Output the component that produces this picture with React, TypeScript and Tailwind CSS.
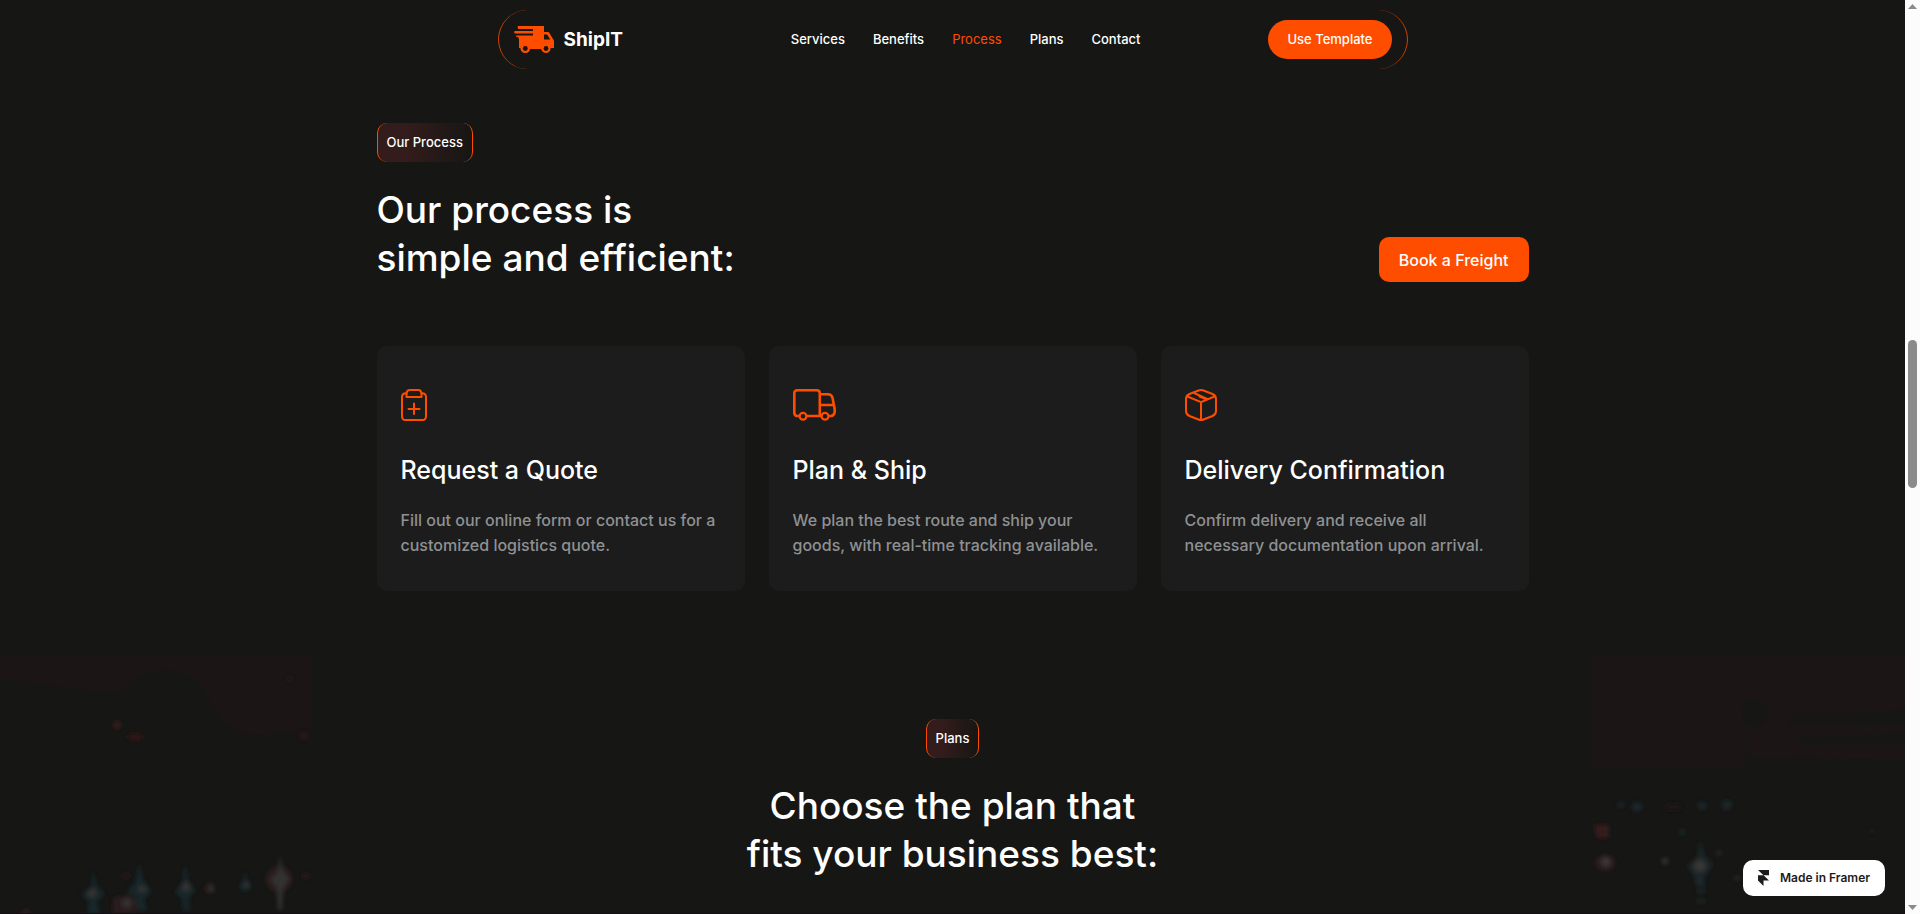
import React from "react";

interface Step {
  title: string;
  lines: [string, string];
  icon: React.ReactNode;
}

const navLinks = ["Services", "Benefits", "Process", "Plans", "Contact"];

const ClipboardIcon = () => (
  <svg
    width="26"
    height="32"
    viewBox="0 0 26 32"
    fill="none"
    stroke="#ff4d00"
    strokeWidth="2"
    strokeLinecap="round"
    strokeLinejoin="round"
  >
    <path d="M5.500 4.200H5C2.500 4.200 1 5.800 1 8.200v19C1 30 2.400 31 4.500 31h17c2.100 0 3.500-1 3.500-3.800v-19c0-2.400-1.500-4-4-4h-.5" />
    <path d="M9 1h8c2.500 0 3.500 1.500 3.500 4v3h-15V5c0-2.500 1-4 3.500-4Z" />
    <path d="M13 14.500v10.500M7.500 20h11" />
  </svg>
);

const TruckIcon = () => (
  <svg
    width="43"
    height="32"
    viewBox="0 0 43 32"
    fill="none"
    stroke="#ff4d00"
    strokeWidth="2.600"
    strokeLinejoin="round"
  >
    <path d="M6 27H4.500C2.600 27 1.300 25.800 1.300 24V4.300c0-1.900 1.100-3 3-3h19.500c1.900 0 3 1.100 3 3V27M14 27h14" />
    <path d="M26.800 5.200h8c3 0 4.300 1.300 4.800 4l2 10.500c.6 4-.6 7.300-4.100 7.300H36M26.800 16h14" />
    <circle cx="10" cy="27.300" r="3.400" strokeWidth="2.200" />
    <circle cx="32" cy="27.300" r="3.400" strokeWidth="2.200" />
  </svg>
);

const BoxIcon = () => (
  <svg
    width="32"
    height="32"
    viewBox="0 0 32 32"
    fill="none"
    stroke="#ff4d00"
    strokeWidth="2"
    strokeLinecap="round"
    strokeLinejoin="round"
  >
    <path d="M13.500 1.500Q16 .6 18.500 1.500L27.500 5Q31 6.500 31 10v12q0 3.500-3.500 5l-9 3.500Q16 31.500 13.500 30.500l-9-3.500Q1 25.500 1 22V10Q1 6.500 4.500 5Z" />
    <path d="M2.500 7.500 16 13.200l13.500-5.700M16 13.200V30.500M9 4l13.700 6.200M14.500 7.500l5 2.200" />
  </svg>
);

const LogoIcon = () => (
  <svg width="40" height="27" viewBox="0 0 40 27" fill="none">
    <path
      fill="#ff4d00"
      fillRule="evenodd"
      d="M4 0h26v6h3.500c1 0 1.600.4 2.100 1.200l3.200 5.600c.8 1 1.200 1.700 1.200 2.800V22h-3.500A4.800 4.800 0 0 1 27.200 23H16A4.800 4.800 0 0 1 6.500 22H5V13.500L4.200 11H2.500C2 11 2 9.500 2.500 9.500H19V7.500H1C0 7.500 0 5 1 5h18V3H4.500C3.500 3 3.500 0 4 0ZM30 8.500v5h6.200l-2.600-4.300c-.3-.5-.7-.7-1.300-.7Z"
    />
    <circle cx="11.300" cy="22.500" r="4.500" fill="#ff4d00" />
    <circle cx="11.300" cy="22.500" r="2.400" fill="#161614" />
    <circle cx="32" cy="22.500" r="4.500" fill="#ff4d00" />
    <circle cx="32" cy="22.500" r="2.400" fill="#161614" />
  </svg>
);

const steps: Step[] = [
  {
    title: "Request a Quote",
    lines: [
      "Fill out our online form or contact us for a",
      "customized logistics quote.",
    ],
    icon: <ClipboardIcon />,
  },
  {
    title: "Plan & Ship",
    lines: [
      "We plan the best route and ship your",
      "goods, with real-time tracking available.",
    ],
    icon: <TruckIcon />,
  },
  {
    title: "Delivery Confirmation",
    lines: [
      "Confirm delivery and receive all",
      "necessary documentation upon arrival.",
    ],
    icon: <BoxIcon />,
  },
];

const Badge = ({ label }: { label: string }) => (
  <div className="flex h-[39px] items-center rounded-[10px] border-x border-[#ff4d00] bg-linear-to-r from-[#331c1b] from-30% to-[#161614] px-[9px] text-[13px] font-medium">
    {label}
  </div>
);

/* Night skyline at the left of the plans section */
const LeftGlow = () => (
  <svg width="312" height="258" viewBox="0 0 312 258" aria-hidden="true">
    <defs>
      <filter id="soft" x="-50%" y="-50%" width="200%" height="200%">
        <feGaussianBlur stdDeviation="2" />
      </filter>
    </defs>
    <path
      fill="#1b1615"
      d="M0 0h312v88c-14-2-16-12-26-12-14 6-40 6-52-2-20-8-24-34-34-44-12-14-24-16-44-14-22 4-26 18-40 22C80 36 40 28 0 24Z"
    />
    <g filter="url(#soft)">
      <circle cx="117" cy="70" r="4" fill="#351b1a" />
      <ellipse cx="135" cy="82" rx="8" ry="4" fill="#2f1919" />
      <circle cx="290" cy="24" r="3" fill="#261918" />
      <circle cx="304" cy="81" r="4" fill="#261918" />
      <g fill="#182629">
        <path d="M93 215l4 16 8 8-8 8 3 12H87l2-12-8-8 10-6Z" />
        <path d="M139 208l5 18 8 10-8 8 3 12h-13l1-14-8-6 8-8Z" />
        <path d="M185 208l4 20 7 8-7 6 1 14h-7l-1-12-8-8 8-6Z" />
        <path d="M245 216l3 10 4 5-5 5h-4l-4-5 4-5Z" />
      </g>
      <g fill="#2c1b1a">
        <path d="M113 243l18-3 8 12-8 7h-18Z" />
        <circle cx="126" cy="221" r="3" />
        <circle cx="210" cy="233" r="5" />
        <ellipse cx="279" cy="224" rx="13" ry="13" />
        <ellipse cx="306" cy="221" rx="5" ry="2" />
        <circle cx="26" cy="258" r="4" />
      </g>
      <g fill="#333032">
        <circle cx="92" cy="238" r="5" />
        <circle cx="127" cy="248" r="5" />
        <circle cx="142" cy="234" r="4" />
        <circle cx="186" cy="232" r="5" />
        <circle cx="211" cy="234" r="3" />
        <circle cx="246" cy="230" r="3" />
        <path d="M280 200l3 16 7 8-7 9-1 22h-4l-1-22-7-8 8-9Z" />
      </g>
    </g>
  </svg>
);

/* Harbour lights at the right of the plans section */
const RightGlow = () => (
  <svg width="312" height="258" viewBox="0 0 312 258" aria-hidden="true">
    <path
      fill="#1b1615"
      d="M0 0h312v55l-60 4-50-1-8 12h118v9l-108 3 10 8h98v15l-115-2H152V62l-8-8 12-8 4-4h-4l-4 4-6 8 5 8v50L0 112Z"
    />
    <ellipse cx="162" cy="58" rx="12" ry="14" fill="#161614" />
    <g filter="url(#soft)">
      <g fill="#1a272b">
        <circle cx="28" cy="150" r="3" />
        <circle cx="44" cy="152" r="5" />
        <circle cx="109" cy="151" r="4" />
        <circle cx="134" cy="150" r="5" />
        <circle cx="89" cy="177" r="3" />
        <circle cx="279" cy="176" r="2" />
        <path d="M107 184l4 16 9 10-9 12 1 9h-9l-2-10-7-10 11-10Z" />
        <ellipse cx="108" cy="236" rx="5" ry="2" />
        <ellipse cx="108" cy="246" rx="5" ry="2" />
      </g>
      <ellipse cx="80" cy="152" rx="9" ry="4" fill="#1f1716" />
      <path d="M0 170h16v13H4Z" fill="#361a1b" />
      <ellipse cx="12" cy="208" rx="10" ry="8" fill="#2a1a1a" />
      <g fill="#383435">
        <circle cx="13" cy="207" r="5" />
        <circle cx="72" cy="206" r="3" />
        <circle cx="126" cy="198" r="2" />
        <circle cx="107" cy="211" r="6" />
        <circle cx="144" cy="223" r="2" />
      </g>
    </g>
  </svg>
);

const Scrollbar = () => (
  <div
    className="flex w-[15px] shrink-0 flex-col items-center justify-between bg-[#fcfcfc] py-1"
    aria-hidden="true"
  >
    <svg width="9" height="5" viewBox="0 0 9 5">
      <path d="M0 5 4.500 0 9 5Z" fill="#8b8b8b" />
    </svg>
    <div className="flex w-full flex-1 flex-col items-center">
      <div className="grow-[331]" />
      <div className="h-[148px] w-[9px] rounded-full bg-[#8b8b8b]" />
      <div className="grow-[417]" />
    </div>
    <svg width="9" height="5" viewBox="0 0 9 5">
      <path d="M0 0 4.500 5 9 0Z" fill="#8b8b8b" />
    </svg>
  </div>
);

export default function App() {
  return (
    <div className="flex min-h-screen bg-[#161614] font-['Inter',sans-serif] text-white">
      <div className="flex min-w-0 flex-1 flex-col">
        {/* Navigation */}
        <header className="flex justify-center pt-[10px]">
          <div className="flex h-[59px] w-full max-w-[910px] items-center rounded-full border-x border-[#ff4d00]/80 px-[15px]">
            <a href="#home" className="flex items-center gap-[10px]">
              <LogoIcon />
              <span className="text-[19px] leading-7 font-bold">ShipIT</span>
            </a>
            <nav className="mr-32 ml-auto flex gap-7 text-[13px] font-medium">
              {navLinks.map((link) => (
                <a
                  key={link}
                  href={`#${link.toLowerCase()}`}
                  className={
                    link === "Process" ? "font-normal text-[#ff4d00]" : ""
                  }
                >
                  {link}
                </a>
              ))}
            </nav>
            <button
              type="button"
              className="h-[39px] rounded-full bg-[#ff4d00] px-[19px] text-[13px] font-medium"
            >
              Use Template
            </button>
          </div>
        </header>

        {/* Process */}
        <section
          id="process"
          className="mx-auto w-full max-w-[1152px] pt-[54px] pb-16"
        >
          <div className="flex items-end justify-between">
            <div className="flex flex-col items-start gap-6">
              <Badge label="Our Process" />
              <h2 className="text-[37px] leading-[48px] font-medium">
                Our process is
                <br />
                simple and efficient:
              </h2>
            </div>
            <button
              type="button"
              className="h-[45px] rounded-[10px] bg-[#ff4d00] px-5 text-base font-medium"
            >
              Book a Freight
            </button>
          </div>

          <div className="mt-16 grid grid-cols-3 gap-6">
            {steps.map((step) => (
              <article
                key={step.title}
                className="rounded-[10px] bg-[#1c1c1c] px-6 pt-[43px] pb-[33px]"
              >
                {step.icon}
                <h3 className="mt-8 text-[25px] leading-[34px] font-medium">
                  {step.title}
                </h3>
                <p className="mt-[21px] text-base leading-[25px] font-medium whitespace-nowrap text-[#8f9193]">
                  {step.lines[0]}
                  <br />
                  {step.lines[1]}
                </p>
              </article>
            ))}
          </div>
        </section>

        {/* Plans */}
        <section
          id="plans"
          className="grid flex-1 grid-cols-[312px_1fr_312px] border-b border-[#160e14]"
        >
          <LeftGlow />
          <div className="flex flex-col items-center gap-6 pt-16">
            <Badge label="Plans" />
            <h2 className="text-center text-[37px] leading-[48px] font-medium">
              Choose the plan that
              <br />
              fits your business best:
            </h2>
          </div>
          <RightGlow />
        </section>
      </div>

      <Scrollbar />

      <a
        href="#framer"
        className="fixed right-[35px] bottom-[18px] flex h-9 items-center gap-[11px] rounded-[10px] bg-white px-[15px] text-xs font-semibold text-[#1c1c1c]"
      >
        <svg width="11" height="16" viewBox="0 0 11 16" aria-hidden="true">
          <path
            fill="currentColor"
            d="M0 0h11v5.300H5.500ZM0 5.300h5.500L11 10.600H5.500V16L0 10.600Z"
          />
        </svg>
        Made in Framer
      </a>
    </div>
  );
}
